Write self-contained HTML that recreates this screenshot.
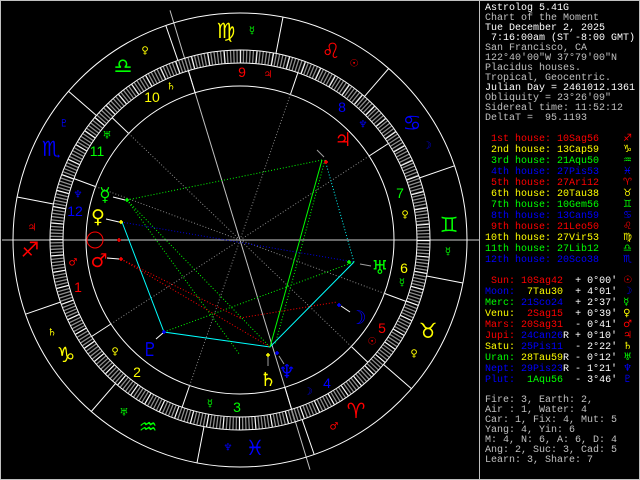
<!DOCTYPE html>
<html><head><meta charset="utf-8"><style>
html,body{margin:0;padding:0;background:#000;}
#w{position:relative;width:640px;height:480px;overflow:hidden;background:#000;}
svg{position:absolute;left:0;top:0;}
pre{position:absolute;left:485px;top:4px;margin:0;font-family:"Liberation Mono",monospace;font-size:10px;line-height:10px;color:#c0c0c0;white-space:pre;}
.w{color:#fff}.r{color:#f00}.y{color:#ff0}.g{color:#0f0}.b{color:#00f}
.s{font-family:"DejaVu Sans",sans-serif;font-size:10px;}
</style></head><body><div id="w">
<svg width="640" height="480" viewBox="0 0 640 480" font-family="DejaVu Sans, sans-serif">
<rect x="0.5" y="0.5" width="639" height="479" fill="none" stroke="#c0c0c0"/>
<line x1="479.5" y1="0" x2="479.5" y2="480" stroke="#c0c0c0"/>
<line x1="2" y1="240" x2="479" y2="240" stroke="#d0d0d0"/>
<line x1="170" y1="10.4" x2="310" y2="469.6" stroke="#c0c0c0"/>
<circle cx="240" cy="240" r="183.5" fill="none" stroke="#8c8c8c" stroke-width="12" stroke-dasharray="1.3 1.9"/>
<circle cx="240" cy="240" r="183.5" fill="none" stroke="#fff" stroke-width="12" stroke-dasharray="1 15.01"/>
<g fill="none" stroke="#fff">
<circle cx="240" cy="240" r="227"/>
<circle cx="240" cy="240" r="190"/>
<circle cx="240" cy="240" r="177"/>
<circle cx="240" cy="240" r="154"/>
</g>
<g stroke="#fff">
<line x1="302.1" y1="419.6" x2="314.2" y2="454.5"/>
<line x1="383.6" y1="364.5" x2="411.5" y2="388.7"/>
<line x1="426.6" y1="276.0" x2="462.9" y2="283.0"/>
<line x1="419.6" y1="177.9" x2="454.5" y2="165.8"/>
<line x1="364.5" y1="96.4" x2="388.7" y2="68.5"/>
<line x1="276.0" y1="53.4" x2="283.0" y2="17.1"/>
<line x1="177.9" y1="60.4" x2="165.8" y2="25.5"/>
<line x1="96.4" y1="115.5" x2="68.5" y2="91.3"/>
<line x1="53.4" y1="204.0" x2="17.1" y2="197.0"/>
<line x1="60.4" y1="302.1" x2="25.5" y2="314.2"/>
<line x1="115.5" y1="383.6" x2="91.3" y2="411.5"/>
<line x1="204.0" y1="426.6" x2="197.0" y2="462.9"/>
<line x1="110.9" y1="324.0" x2="91.6" y2="336.5"/>
<line x1="189.6" y1="385.5" x2="182.1" y2="407.3"/>
<line x1="284.9" y1="387.3" x2="291.6" y2="409.3"/>
<line x1="351.3" y1="346.5" x2="367.9" y2="362.4"/>
<line x1="384.4" y1="293.4" x2="406.0" y2="301.4"/>
<line x1="369.1" y1="156.0" x2="388.4" y2="143.5"/>
<line x1="290.4" y1="94.5" x2="297.9" y2="72.7"/>
<line x1="195.1" y1="92.7" x2="188.4" y2="70.7"/>
<line x1="128.7" y1="133.5" x2="112.1" y2="117.6"/>
<line x1="95.6" y1="186.6" x2="74.0" y2="178.6"/>
</g>
<g stroke="#8a8a8a" stroke-dasharray="1 2">
<line x1="110.9" y1="324.0" x2="240" y2="240"/>
<line x1="189.6" y1="385.5" x2="240" y2="240"/>
<line x1="351.3" y1="346.5" x2="240" y2="240"/>
<line x1="384.4" y1="293.4" x2="240" y2="240"/>
<line x1="369.1" y1="156.0" x2="240" y2="240"/>
<line x1="290.4" y1="94.5" x2="240" y2="240"/>
<line x1="128.7" y1="133.5" x2="240" y2="240"/>
<line x1="95.6" y1="186.6" x2="240" y2="240"/>
</g>
<g fill="none">
<polyline points="122,222 164,332 270,347 354,262" stroke="#0ff"/>
<line x1="354" y1="262" x2="325" y2="160" stroke="#0ff" stroke-dasharray="1 2"/>
<line x1="322" y1="160" x2="270" y2="347" stroke="#0f0"/>
<g stroke="#0f0" stroke-dasharray="1 2">
<line x1="325" y1="160" x2="275" y2="345"/>
<line x1="322" y1="160" x2="127" y2="200"/>
<line x1="127" y1="200" x2="270" y2="347"/>
<line x1="127" y1="200" x2="240" y2="355"/>
<line x1="164" y1="332" x2="354" y2="262"/>
</g>
<line x1="121" y1="222" x2="354" y2="262" stroke="#0000e0" stroke-dasharray="1 2"/>
<g stroke="#f00" stroke-dasharray="1 2">
<line x1="121" y1="259" x2="270" y2="347"/>
<line x1="121" y1="259" x2="240" y2="318"/>
<line x1="240" y1="318" x2="337" y2="302"/>
</g>
</g>
<g stroke="#fff">
<line x1="113" y1="197" x2="125" y2="200"/>
<line x1="106" y1="219" x2="119" y2="222"/>
<line x1="107" y1="258" x2="119" y2="259"/>
<line x1="156" y1="339" x2="163" y2="333"/>
<line x1="341" y1="306" x2="350" y2="312"/>
</g>
<g stroke="#a0a0a0">
<line x1="317" y1="150" x2="324" y2="157"/>
<line x1="360" y1="264" x2="371" y2="266"/>
<line x1="268" y1="357" x2="268" y2="366"/>
<line x1="279" y1="356" x2="284" y2="364"/>
</g>
<g stroke-width="1.5">
<path d="M125 200h4M127 198v4" stroke="#0f0"/>
<path d="M119 222h4M121 220v4" stroke="#ff0"/>
<path d="M117 240h4M119 238v4" stroke="#f00"/>
<path d="M119 259h4M121 257v4" stroke="#f00"/>
<path d="M324 162h4M326 160v4" stroke="#f00"/>
<path d="M337 305h4M339 303v4" stroke="#00f"/>
<path d="M347 262h4M349 260v4" stroke="#0f0"/>
<path d="M266 355h4M268 353v4" stroke="#ff0"/>
<path d="M275 353h4M277 351v4" stroke="#00f"/>
<path d="M162 332h4M164 330v4" stroke="#00f"/>
</g>
<g font-size="21" text-anchor="middle" dominant-baseline="central">
<text x="356" y="411" fill="#f00">♈&#xFE0E;</text>
<text x="428" y="331" fill="#ff0">♉&#xFE0E;</text>
<text x="449" y="225" fill="#0f0">♊&#xFE0E;</text>
<text x="412" y="123" fill="#00f">♋&#xFE0E;</text>
<text x="331" y="51" fill="#f00">♌&#xFE0E;</text>
<text x="226" y="31" fill="#ff0">♍&#xFE0E;</text>
<text x="123" y="66" fill="#0f0">♎&#xFE0E;</text>
<text x="51" y="149" fill="#00f">♏&#xFE0E;</text>
<text x="30" y="250" fill="#f00">♐&#xFE0E;</text>
<text x="66" y="355" fill="#ff0">♑&#xFE0E;</text>
<text x="148" y="427" fill="#0f0">♒&#xFE0E;</text>
<text x="255" y="448" fill="#00f">♓&#xFE0E;</text>
</g>
<g font-family="Liberation Sans, sans-serif" font-size="14" text-anchor="middle" dominant-baseline="central">
<text x="78" y="287" fill="#f00">1</text>
<text x="137" y="372" fill="#ff0">2</text>
<text x="237" y="407" fill="#0f0">3</text>
<text x="327" y="383" fill="#00f">4</text>
<text x="382" y="328" fill="#f00">5</text>
<text x="404" y="268" fill="#ff0">6</text>
<text x="400" y="193" fill="#0f0">7</text>
<text x="342" y="107" fill="#00f">8</text>
<text x="242" y="72" fill="#f00">9</text>
<text x="152" y="97" fill="#ff0">10</text>
<text x="97" y="151" fill="#0f0">11</text>
<text x="75" y="211" fill="#00f">12</text>
</g>
<g font-size="10" text-anchor="middle" dominant-baseline="central">
<text x="145" y="51" fill="#ff0">♀</text>
<text x="354" y="64" fill="#f00">☉</text>
<text x="427" y="146" fill="#00f">☽</text>
<text x="448" y="252" fill="#0f0">☿</text>
<text x="252" y="31" fill="#0f0">☿</text>
<text x="414" y="354" fill="#ff0">♀</text>
<text x="334" y="427" fill="#f00">♂</text>
<text x="228" y="448" fill="#00f">♆</text>
<text x="124" y="413" fill="#0f0">♅</text>
<text x="52" y="333" fill="#ff0">♄</text>
<text x="32" y="228" fill="#f00">♃</text>
<text x="64" y="124" fill="#00f">♇</text>
<text x="171" y="87" fill="#ff0">♄</text>
<text x="107" y="136" fill="#0f0">♅</text>
<text x="78" y="195" fill="#00f">♆</text>
<text x="73" y="263" fill="#f00">♂</text>
<text x="115" y="352" fill="#ff0">♀</text>
<text x="210" y="404" fill="#0f0">☿</text>
<text x="308" y="392" fill="#00f">☽</text>
<text x="372" y="342" fill="#f00">☉</text>
<text x="402" y="283" fill="#0f0">☿</text>
<text x="405" y="215" fill="#ff0">♀</text>
<text x="363" y="125" fill="#00f">♆</text>
<text x="268" y="75" fill="#f00">♃</text>
</g>
<circle cx="95" cy="240" r="8" fill="none" stroke="#f00"/>
<g font-size="19" text-anchor="middle" dominant-baseline="central">
<text x="105" y="195" fill="#0f0">☿</text>
<text x="98" y="217" fill="#ff0">♀</text>
<text x="99" y="261" fill="#f00">♂</text>
<text x="343" y="140" fill="#f00">♃</text>
<text x="358" y="318" fill="#00f">☽</text>
<text x="380" y="268" fill="#0f0">♅</text>
<text x="268" y="380" fill="#ff0">♄</text>
<text x="287" y="372" fill="#00f">♆</text>
<text x="150" y="350" fill="#00f">♇</text>
</g>
</svg>
<pre><span class="w">Astrolog 5.41G</span>
Chart of the Moment
<span class="w">Tue December 2, 2025</span>
<span class="w"> 7:16:00am (ST -8:00 GMT)</span>
San Francisco, CA
122°40'00"W 37°79'00"N
Placidus houses.
Tropical, Geocentric.
<span class="w">Julian Day = 2461012.1361</span>
Obliquity = 23°26'09"
Sidereal time: 11:52:12
DeltaT =  95.1193

<span class="r"> 1st house: 10Sag56    <span class="s">♐</span></span>
<span class="y"> 2nd house: 13Cap59    <span class="s">♑</span></span>
<span class="g"> 3rd house: 21Aqu50    <span class="s">♒</span></span>
<span class="b"> 4th house: 27Pis53    <span class="s">♓</span></span>
<span class="r"> 5th house: 27Ari12    <span class="s">♈</span></span>
<span class="y"> 6th house: 20Tau38    <span class="s">♉</span></span>
<span class="g"> 7th house: 10Gem56    <span class="s">♊</span></span>
<span class="b"> 8th house: 13Can59    <span class="s">♋</span></span>
<span class="r"> 9th house: 21Leo50    <span class="s">♌</span></span>
<span class="y">10th house: 27Vir53    <span class="s">♍</span></span>
<span class="g">11th house: 27Lib12    <span class="s">♎</span></span>
<span class="b">12th house: 20Sco38    <span class="s">♏</span></span>

<span class="r"> Sun:</span> <span class="r">10Sag42</span>  <span class="w">+ 0°00'</span> <span class="s r">☉</span>
<span class="b">Moon:</span> <span class="y"> 7Tau30</span>  <span class="w">+ 4°01'</span> <span class="s b">☽</span>
<span class="g">Merc:</span> <span class="b">21Sco24</span>  <span class="w">+ 2°37'</span> <span class="s g">☿</span>
<span class="y">Venu:</span> <span class="r"> 2Sag15</span>  <span class="w">+ 0°39'</span> <span class="s y">♀</span>
<span class="r">Mars:</span> <span class="r">20Sag31</span>  <span class="w">- 0°41'</span> <span class="s r">♂</span>
<span class="r">Jupi:</span> <span class="b">24Can26</span><span class="w">R + 0°10'</span> <span class="s r">♃</span>
<span class="y">Satu:</span> <span class="b">25Pis11</span>  <span class="w">- 2°22'</span> <span class="s y">♄</span>
<span class="g">Uran:</span> <span class="y">28Tau59</span><span class="w">R - 0°12'</span> <span class="s g">♅</span>
<span class="b">Nept:</span> <span class="b">29Pis23</span><span class="w">R - 1°21'</span> <span class="s b">♆</span>
<span class="b">Plut:</span> <span class="g"> 1Aqu56</span>  <span class="w">- 3°46'</span> <span class="s b">♇</span>

Fire: 3, Earth: 2,
Air : 1, Water: 4
Car: 1, Fix: 4, Mut: 5
Yang: 4, Yin: 6
M: 4, N: 6, A: 6, D: 4
Ang: 2, Suc: 3, Cad: 5
Learn: 3, Share: 7</pre>
</div></body></html>
